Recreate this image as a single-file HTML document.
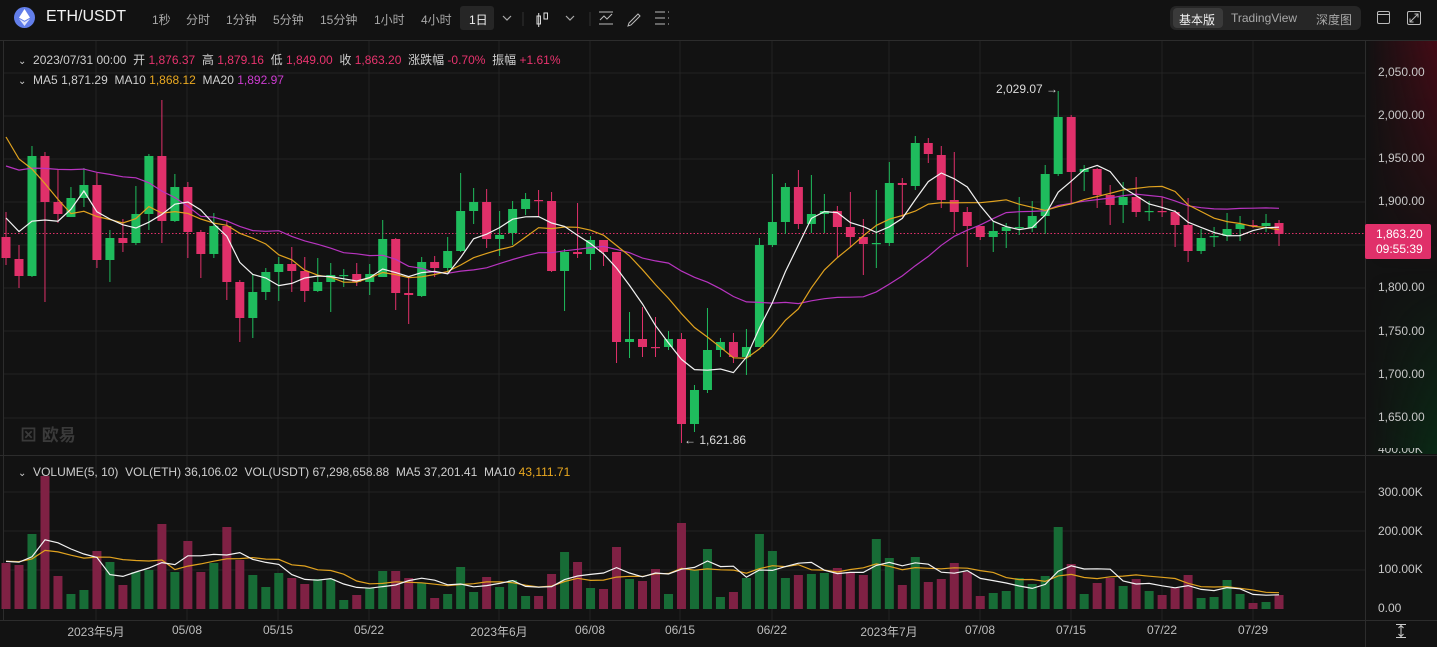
<!DOCTYPE html>
<html><head><meta charset="utf-8"><style>
*{margin:0;padding:0;box-sizing:border-box}
body{width:1437px;height:647px;background:#121212;overflow:hidden;font-family:"Liberation Sans","Noto Sans CJK SC",sans-serif;color:#bdbdbd;position:relative}
.a{position:absolute;white-space:nowrap}
.tf{position:absolute;top:11px;font-size:12px;color:#a8a8a8}
.lg{position:absolute;left:18px;font-size:12px;color:#cfcfcf}
.lg b{font-weight:normal;color:#e8336e}
.ax{position:absolute;left:1378px;font-size:12px;color:#c8c8c8}
.dt{position:absolute;top:623px;font-size:12px;color:#bdbdbd;transform:translateX(-50%)}
</style></head><body>
<svg class="a" style="left:0;top:0" width="1437" height="647" id="s"></svg>
<div class="a" style="left:1366px;top:41px;width:71px;height:230px;background:linear-gradient(90deg,rgba(90,0,15,0),rgba(110,5,25,.55));-webkit-mask:linear-gradient(#000,transparent);mask:linear-gradient(#000,transparent)"></div>
<div class="a" style="left:1366px;top:270px;width:71px;height:184px;background:linear-gradient(90deg,rgba(0,60,20,0),rgba(0,70,25,.45));-webkit-mask:linear-gradient(transparent,#000);mask:linear-gradient(transparent,#000)"></div>

<div class="a" style="left:14px;top:7px;width:21px;height:21px;border-radius:50%;background:#627eea"></div>
<svg class="a" style="left:19px;top:9px" width="11" height="17" viewBox="0 0 11 17"><path d="M5.5 0L0 8.6 5.5 11.8 11 8.6z" fill="#fff"/><path d="M0 9.7L5.5 17 11 9.7 5.5 12.9z" fill="#dfe4fb"/></svg>
<div class="a" style="left:46px;top:8px;font-size:16px;color:#f2f2f2">ETH/USDT</div>
<div class="tf" style="left:152px">1秒</div>
<div class="tf" style="left:186px">分时</div>
<div class="tf" style="left:226px">1分钟</div>
<div class="tf" style="left:273px">5分钟</div>
<div class="tf" style="left:320px">15分钟</div>
<div class="tf" style="left:374px">1小时</div>
<div class="tf" style="left:421px">4小时</div>
<div class="a" style="left:460px;top:6px;width:34px;height:24px;background:#262626;border-radius:3px"></div>
<div class="tf" style="left:469px;color:#eee">1日</div>
<svg class="a" style="left:500px;top:10px" width="100" height="18"><path d="M3 6l4 4 4-4" stroke="#aaa" fill="none" stroke-width="1.2"/><line x1="23" y1="2" x2="23" y2="16" stroke="#333"/><rect x="37" y="6" width="3.5" height="8" stroke="#ddd" fill="none"/><line x1="38.7" y1="3" x2="38.7" y2="17" stroke="#ddd"/><rect x="44" y="3" width="3.5" height="6" stroke="#ddd" fill="none"/><path d="M66 6l4 4 4-4" stroke="#aaa" fill="none" stroke-width="1.2"/><line x1="90" y1="2" x2="90" y2="16" stroke="#333"/></svg>
<svg class="a" style="left:596px;top:8px" width="80" height="20"><line x1="3" y1="4" x2="17" y2="4" stroke="#bbb"/><line x1="3" y1="16" x2="17" y2="16" stroke="#bbb"/><path d="M4 12l4-4 3 3 5-5" stroke="#bbb" fill="none"/><path d="M33 15l9-9 2 2-9 9-3 1z" stroke="#bbb" fill="none"/><path d="M59 4h10M59 10h10M59 16h10" stroke="#bbb"/><path d="M72 4h1M72 10h1M72 16h1" stroke="#bbb"/></svg>
<div class="a" style="left:1170px;top:6px;width:191px;height:24px;background:#262626;border-radius:6px"></div>
<div class="a" style="left:1173px;top:8px;width:50px;height:20px;background:#3a3a3a;border-radius:4px"></div>
<div class="a" style="left:1179px;top:11px;font-size:12px;color:#f2f2f2">基本版</div>
<div class="a" style="left:1231px;top:11px;font-size:12px;color:#a8a8a8">TradingView</div>
<div class="a" style="left:1316px;top:11px;font-size:12px;color:#a8a8a8">深度图</div>
<svg class="a" style="left:1376px;top:10px" width="50" height="16"><rect x="1.5" y="1.5" width="12" height="12" rx="1.5" stroke="#bbb" fill="none"/><line x1="1.5" y1="4.5" x2="13.5" y2="4.5" stroke="#bbb"/><rect x="31.5" y="1.5" width="13" height="13" rx="1.5" stroke="#bbb" fill="none"/><path d="M34 12l4-4M34 8.5v3.5h3.5M42 4l-4 4M42 7.5V4h-3.5" stroke="#bbb" fill="none"/></svg>

<div class="lg" style="top:51px"><span style="font-size:10px">⌄</span>&nbsp; 2023/07/31 00:00 &nbsp;开 <b>1,876.37</b> &nbsp;高 <b>1,879.16</b> &nbsp;低 <b>1,849.00</b> &nbsp;收 <b>1,863.20</b> &nbsp;涨跌幅 <b>-0.70%</b> &nbsp;振幅 <b>+1.61%</b></div>
<div class="lg" style="top:73px"><span style="font-size:10px">⌄</span>&nbsp; MA5 1,871.29 &nbsp;MA10 <span style="color:#e9a820">1,868.12</span> &nbsp;MA20 <span style="color:#cc3cd0">1,892.97</span></div>
<div class="lg" style="top:465px"><span style="font-size:10px">⌄</span>&nbsp; VOLUME(5, 10) &nbsp;VOL(ETH) 36,106.02 &nbsp;VOL(USDT) 67,298,658.88 &nbsp;MA5 37,201.41 &nbsp;MA10 <span style="color:#e9a820">43,111.71</span></div>

<div class="ax" style="top:65px">2,050.00</div>
<div class="ax" style="top:108px">2,000.00</div>
<div class="ax" style="top:151px">1,950.00</div>
<div class="ax" style="top:194px">1,900.00</div>
<div class="ax" style="top:280px">1,800.00</div>
<div class="ax" style="top:324px">1,750.00</div>
<div class="ax" style="top:367px">1,700.00</div>
<div class="ax" style="top:410px">1,650.00</div>
<div class="ax" style="top:448px;height:8px;overflow:hidden;line-height:2px">400.00K</div>
<div class="ax" style="top:485px">300.00K</div>
<div class="ax" style="top:524px">200.00K</div>
<div class="ax" style="top:562px">100.00K</div>
<div class="ax" style="top:601px">0.00</div>
<div class="a" style="left:1365px;top:224px;width:66px;height:35px;background:#e0306a;border-radius:2px"></div>
<div class="a" style="left:1376px;top:227px;font-size:12px;color:#fff">1,863.20</div>
<div class="a" style="left:1376px;top:242px;font-size:12px;color:#fff">09:55:39</div>
<div class="a" style="left:996px;top:82px;font-size:12px;color:#ddd">2,029.07 →</div>
<div class="a" style="left:684px;top:433px;font-size:12px;color:#ddd">← 1,621.86</div>
<div class="a" style="left:20px;top:421px;font-size:17px;color:#3a3a3a;font-weight:bold">⊠ 欧易</div>

<div class="dt" style="left:96px">2023年5月</div>
<div class="dt" style="left:187px">05/08</div>
<div class="dt" style="left:278px">05/15</div>
<div class="dt" style="left:369px">05/22</div>
<div class="dt" style="left:499px">2023年6月</div>
<div class="dt" style="left:590px">06/08</div>
<div class="dt" style="left:680px">06/15</div>
<div class="dt" style="left:772px">06/22</div>
<div class="dt" style="left:889px">2023年7月</div>
<div class="dt" style="left:980px">07/08</div>
<div class="dt" style="left:1071px">07/15</div>
<div class="dt" style="left:1162px">07/22</div>
<div class="dt" style="left:1253px">07/29</div>
<svg class="a" style="left:1394px;top:623px" width="14" height="16"><path d="M2 1.5h10M2 14.5h10M7 2v12M4.5 5L7 2.5 9.5 5M4.5 11L7 13.5 9.5 11" stroke="#ccc" fill="none"/></svg>

<script>
var C=[['r',237,258,212,265],['r',259,276,245,288],['g',156,276,146,277],['r',156,202,152,302],['r',202,214,170,223],['g',198,217,187,217],['g',185,198,168,207],['r',185,260,173,268],['g',238,260,230,282],['r',238,243,219,252],['g',214,243,186,245],['g',156,214,154,230],['r',156,221,100,243],['g',187,221,174,222],['r',187,232,182,258],['r',232,254,230,278],['g',226,254,213,258],['r',226,282,220,300],['r',282,318,280,342],['g',292,318,274,338],['g',272,292,268,300],['g',264,272,257,301],['r',264,271,247,292],['r',271,291,257,302],['g',282,291,258,292],['g',275,282,263,312],['g',275,276,269,287],['r',274,282,263,286],['g',274,282,264,295],['g',239,277,220,277],['r',239,293,238,310],['r',293,295,277,324],['g',262,296,257,297],['r',262,268,256,277],['g',251,268,237,273],['g',211,251,173,252],['g',202,211,188,224],['r',202,239,189,248],['g',235,239,211,256],['g',209,233,201,245],['g',199,209,193,215],['r',200,201,190,216],['r',201,271,192,272],['g',252,271,249,311],['r',252,254,203,258],['g',240,254,236,270],['r',240,252,240,266],['r',252,342,252,363],['g',339,342,312,358],['r',339,347,307,357],['r',347,348,317,357],['g',339,347,331,350],['r',339,424,333,443],['g',390,424,385,432],['g',350,390,308,393],['g',342,350,338,357],['r',342,357,333,363],['g',347,357,329,375],['g',245,347,238,347],['g',222,245,174,247],['g',187,222,183,234],['r',187,224,170,229],['g',214,224,175,233],['g',211,214,194,233],['r',211,227,206,257],['r',227,237,192,247],['r',237,244,219,275],['g',243,244,190,268],['g',183,243,162,246],['r',183,185,178,217],['g',143,186,136,190],['r',143,154,138,163],['r',155,200,146,208],['r',200,212,152,232],['r',212,226,207,267],['r',226,237,226,240],['g',231,237,222,252],['g',227,231,223,248],['g',227,228,197,235],['g',216,228,201,232],['g',174,216,165,234],['g',117,174,91,176],['r',117,172,115,203],['g',169,172,165,191],['r',169,195,168,208],['r',195,205,185,225],['g',197,205,182,223],['r',197,212,177,217],['g',211,212,201,221],['r',211,212,197,217],['r',212,225,210,247],['r',225,251,198,262],['g',238,251,229,254],['g',236,237,227,247],['g',229,236,213,241],['g',224,229,216,241],['r',225,226,220,228],['g',223,226,214,232],['r',223,234,220,246]];
var V=[563,565,534,476,576,594,590,551,562,585,572,570,524,572,541,572,563,527,560,575,587,573,578,584,579,579,600,595,588,571,571,578,583,598,594,567,592,577,587,580,596,596,574,552,562,588,589,547,579,581,569,594,523,570,549,597,592,578,534,551,578,575,574,573,568,572,575,539,558,585,557,582,579,563,572,596,593,591,578,584,576,527,564,594,583,578,586,579,591,595,588,575,598,597,580,594,603,602,595];
function X(i){return 6+12.99*i}
var h='';
// grid
var vx=[96,187,278,369,499,590,680,772,889,980,1071,1162,1253];
vx.forEach(function(x){h+='<line x1="'+x+'" y1="41" x2="'+x+'" y2="620" stroke="#232323"/>'});
[73,116,159,202,245,288,331,374,418].forEach(function(y){h+='<line x1="4" y1="'+y+'" x2="1365" y2="'+y+'" stroke="#232323"/>'});
[492,531,570].forEach(function(y){h+='<line x1="4" y1="'+y+'" x2="1365" y2="'+y+'" stroke="#232323"/>'});
h+='<line x1="0" y1="40.5" x2="1437" y2="40.5" stroke="#2c2c2c"/><line x1="0" y1="455.5" x2="1437" y2="455.5" stroke="#2c2c2c"/><line x1="0" y1="620.5" x2="1437" y2="620.5" stroke="#2c2c2c"/><line x1="1365.5" y1="41" x2="1365.5" y2="647" stroke="#2c2c2c"/><line x1="3.5" y1="41" x2="3.5" y2="620" stroke="#2c2c2c"/>';
h+='<line x1="4" y1="233.5" x2="1365" y2="233.5" stroke="#e0306a" stroke-dasharray="1.5 2" stroke-width="1"/>';
var G='#1fbc5d',R='#e0306a',VG='#176c36',VR='#7f2144';
C.forEach(function(c,i){var x=X(i),col=c[0]=='g'?G:R;
h+='<line x1="'+x+'" y1="'+c[3]+'" x2="'+x+'" y2="'+c[4]+'" stroke="'+col+'"/>';
h+='<rect x="'+(x-4.5)+'" y="'+c[1]+'" width="9" height="'+Math.max(1.2,c[2]-c[1])+'" fill="'+col+'"/>';
h+='<rect x="'+(x-4.5)+'" y="'+V[i]+'" width="9" height="'+(609-V[i])+'" fill="'+(c[0]=='g'?VG:VR)+'"/>';});
var cl=[];for(var k=0;k<10;k++)cl.push(195);for(k=0;k<5;k++)cl.push(56);for(k=0;k<4;k++)cl.push(208);
C.forEach(function(c){cl.push(c[0]=='g'?c[1]:c[2])});
function ma(arr,n,off,col,w){var p=[];for(var i=0;i<99;i++){var s=0;for(var j=0;j<n;j++)s+=arr[off+i-j];p.push(X(i).toFixed(1)+','+(s/n).toFixed(1))}
h+='<polyline points="'+p.join(' ')+'" fill="none" stroke="'+col+'" stroke-width="'+(w||1.2)+'"/>';}
ma(cl,20,19,'#b834c0');ma(cl,10,19,'#e0a21f');ma(cl,5,19,'#f2f2f2');
var vv=[];for(k=0;k<9;k++)vv.push(561);V.forEach(function(v){vv.push(v)});
ma(vv,10,9,'#e0a21f');ma(vv,5,9,'#f2f2f2');
document.getElementById('s').innerHTML=h;
</script>
</body></html>
